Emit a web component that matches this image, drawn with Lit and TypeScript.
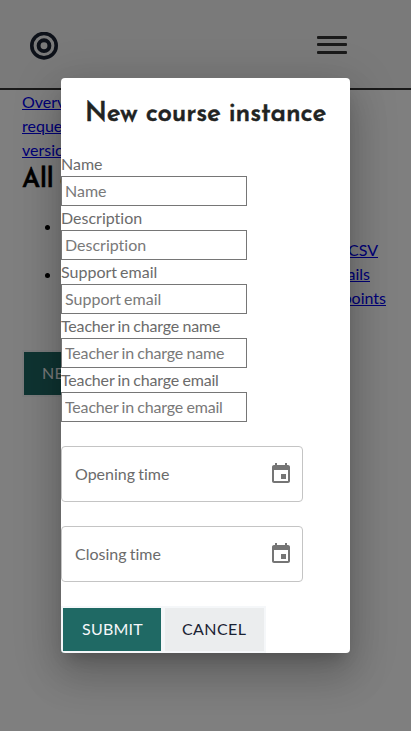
import { LitElement, html, css } from "lit";
import { customElement } from "lit/decorators.js";
import { classMap } from "lit/directives/class-map.js";

const fields = ["Name", "Description", "Support email", "Teacher in charge name", "Teacher in charge email"];
const times = ["Opening time", "Closing time"];

@customElement("app-root")
export class AppRoot extends LitElement {
  static styles = css`
    :host {
      display: block;
      position: relative;
      height: 731px;
      overflow: hidden;
      background: #fff;
      font: 16px/24px Lato, sans-serif;
      font-variant-ligatures: none;
      color: #000;
    }
    * { box-sizing: border-box; }
    header {
      height: 90px;
      padding: 0 64px 0 30px;
      display: flex;
      justify-content: space-between;
      align-items: center;
      background: #f4f4f4;
      border-bottom: 2px solid #343434;
    }
    .logo { display: block; margin-top: 3px; }
    .menu { display: block; margin-top: 2px; }
    main { padding: 0 22px; }
    a { color: #0000ee; text-decoration: underline; }
    .crumb { display: block; width: 110px; }
    h1, h2 {
      margin: 0;
      font-family: "Josefin Sans", Lato, sans-serif;
      font-weight: 600;
      letter-spacing: -0.18px;
      -webkit-text-stroke: 0.45px currentColor;
    }
    h1 { font-size: 26px; line-height: 37px; height: 37px; white-space: nowrap; word-spacing: -1.5px; }
    ul { margin: 15px 0 0; padding: 0 0 0 40px; }
    .row { display: block; height: 24px; text-align: right; white-space: nowrap; }
    .name { text-align: left; }
    .csv { padding-right: 11px; }
    .details { padding-right: 19px; }
    .points { padding-right: 3px; }
    .btn {
      font: 16px/24px Lato, sans-serif;
      height: 47px;
      border: 2px solid #f5f7f9;
      border-radius: 0;
      padding: 0 18px 2px;
      margin: 0;
      background: #1f6964;
      color: #f5f7f9;
      white-space: nowrap;
    }
    .new { display: block; margin-top: 40px; letter-spacing: 0.3px; }
    .backdrop {
      position: absolute;
      inset: 0;
      background: rgba(0, 0, 0, 0.5);
    }
    .dialog {
      position: absolute;
      left: 61px;
      top: 78px;
      width: 289px;
      height: 575px;
      border-radius: 4px;
      overflow: hidden;
      background: #fff;
      color: #6b6b6b;
      word-spacing: -1px;
      box-shadow: 0 11px 15px -7px rgba(0, 0, 0, 0.2),
        0 24px 38px 3px rgba(0, 0, 0, 0.14),
        0 9px 46px 8px rgba(0, 0, 0, 0.12);
    }
    h2 {
      height: 74px;
      padding: 18px 24px 0;
      font-size: 26px;
      line-height: 37px;
      white-space: nowrap;
      word-spacing: 0;
      color: #212322;
    }
    label { display: block; height: 24px; }
    .text {
      display: block;
      width: 186px;
      height: 30px;
      padding: 0 3px 2px;
      border: 1px solid #767676;
      border-radius: 0;
      font: 16px/24px Lato, sans-serif;
      font-variant-ligatures: none;
      word-spacing: -1px;
      background: #fff;
    }
    .tight { letter-spacing: -0.17px; word-spacing: -0.6px; }
    .text::placeholder { color: #797979; opacity: 1; }
    .time {
      width: 242px;
      height: 56px;
      margin-top: 24px;
      padding: 0 9px 0 13px;
      display: flex;
      align-items: center;
      justify-content: space-between;
      border: 1px solid #c4c4c4;
      border-radius: 4px;
    }
    .time svg { fill: #757575; }
    .actions { display: flex; margin-top: 24px; }
    .submit { width: 102px; padding-right: 17px; letter-spacing: 0.25px; }
    .cancel { width: 103px; padding-left: 17px; letter-spacing: 0.4px; background: #ebedee; color: #1a2233; }
  `;

  render() {
    return html`
      <header>
        <svg class="logo" width="28" height="28" viewBox="0 0 28 28" fill="none" stroke="#1a2233">
          <circle cx="14" cy="13.7" r="12.2" stroke-width="3.6" />
          <circle cx="14" cy="13.7" r="5.4" stroke-width="3.9" />
        </svg>
        <svg class="menu" width="30" height="18" viewBox="0 0 30 18" fill="#343434">
          <rect width="30" height="3" rx="1" />
          <rect y="7" width="30" height="3" rx="1" />
          <rect y="15" width="30" height="3" rx="1" />
        </svg>
      </header>
      <main>
        <a class="crumb" href="#">Overview of requests and versions</a>
        <h1>All course instances</h1>
        <ul>
          <li><span class="row name">Course</span><span class="row csv"><a href="#">CSV</a></span></li>
          <li><span class="row details"><a href="#">Details</a></span><span class="row points"><a href="#">points</a></span></li>
        </ul>
        <button class="btn new">NEW INSTANCE</button>
      </main>
      <div class="backdrop"></div>
      <section class="dialog">
        <h2>New course instance</h2>
        ${fields.map((f) => {
          const tight = f.startsWith("Te");
          return html`<label class=${classMap({ tight })}>${f}</label>
            <input class=${classMap({ text: true, tight })} placeholder=${f} />`;
        })}
        ${times.map(
          (t) => html`<div class="time">
            <span>${t}</span>
            <svg width="24" height="24" viewBox="0 0 24 24">
              <path d="M17 12h-5v5h5v-5zM16 1v2H8V1H6v2H5c-1.11 0-1.99.9-1.99 2L3 19c0 1.1.89 2 2 2h14c1.1 0 2-.9 2-2V5c0-1.1-.9-2-2-2h-1V1h-2zm3 18H5V8h14v11z" />
            </svg>
          </div>`
        )}
        <div class="actions">
          <button class="btn submit">SUBMIT</button>
          <button class="btn cancel">CANCEL</button>
        </div>
      </section>
    `;
  }
}
